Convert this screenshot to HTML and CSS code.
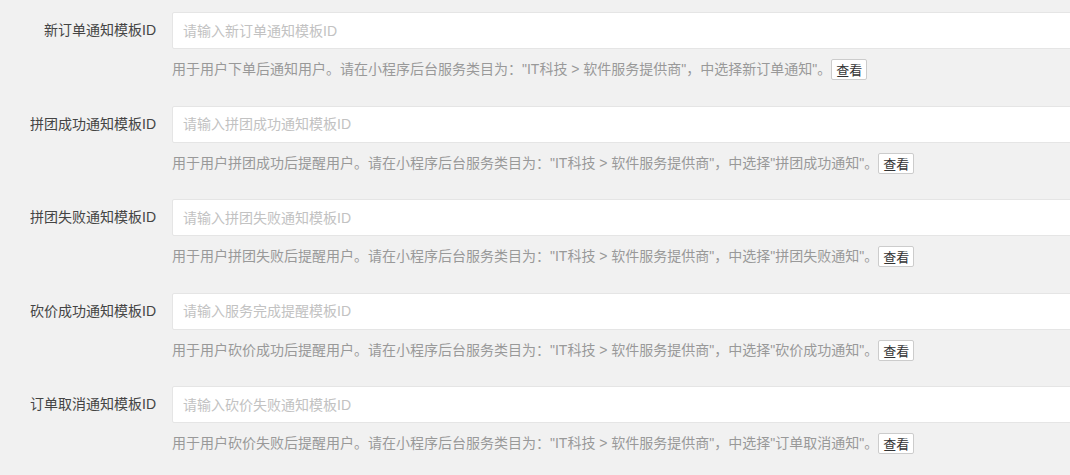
FILE: index.html
```html
<!DOCTYPE html>
<html lang="zh-CN">
<head>
    <meta charset="UTF-8">
    <meta name="viewport" content="width=device-width, initial-scale=1.0">
    <title>模板消息设置</title>
    <link rel="stylesheet" href="styles.css">
</head>
<body>
    <form class="settings-form">
        <div class="form-group">
            <label class="form-label" for="tplNewOrder">新订单通知模板ID</label>
            <div class="form-control">
                <input type="text" id="tplNewOrder" class="form-input" placeholder="请输入新订单通知模板ID">
                <div class="help-block">用于用户下单后通知用户。请在小程序后台服务类目为："IT科技 &gt; 软件服务提供商"，中选择新订单通知"。<button type="button" class="btn-view">查看</button></div>
            </div>
        </div>

        <div class="form-group">
            <label class="form-label" for="tplGroupSuccess">拼团成功通知模板ID</label>
            <div class="form-control">
                <input type="text" id="tplGroupSuccess" class="form-input" placeholder="请输入拼团成功通知模板ID">
                <div class="help-block">用于用户拼团成功后提醒用户。请在小程序后台服务类目为："IT科技 &gt; 软件服务提供商"，中选择"拼团成功通知"。<button type="button" class="btn-view">查看</button></div>
            </div>
        </div>

        <div class="form-group">
            <label class="form-label" for="tplGroupFail">拼团失败通知模板ID</label>
            <div class="form-control">
                <input type="text" id="tplGroupFail" class="form-input" placeholder="请输入拼团失败通知模板ID">
                <div class="help-block">用于用户拼团失败后提醒用户。请在小程序后台服务类目为："IT科技 &gt; 软件服务提供商"，中选择"拼团失败通知"。<button type="button" class="btn-view">查看</button></div>
            </div>
        </div>

        <div class="form-group">
            <label class="form-label" for="tplBargainSuccess">砍价成功通知模板ID</label>
            <div class="form-control">
                <input type="text" id="tplBargainSuccess" class="form-input" placeholder="请输入服务完成提醒模板ID">
                <div class="help-block">用于用户砍价成功后提醒用户。请在小程序后台服务类目为："IT科技 &gt; 软件服务提供商"，中选择"砍价成功通知"。<button type="button" class="btn-view">查看</button></div>
            </div>
        </div>

        <div class="form-group">
            <label class="form-label" for="tplOrderCancel">订单取消通知模板ID</label>
            <div class="form-control">
                <input type="text" id="tplOrderCancel" class="form-input" placeholder="请输入砍价失败通知模板ID">
                <div class="help-block">用于用户砍价失败后提醒用户。请在小程序后台服务类目为："IT科技 &gt; 软件服务提供商"，中选择"订单取消通知"。<button type="button" class="btn-view">查看</button></div>
            </div>
        </div>
    </form>
</body>
</html>
```

FILE: styles.css
```css
body {
    margin: 0;
    background-color: #f1f1f1;
    font-family: "Liberation Sans", "Noto Sans CJK SC", sans-serif;
    font-size: 14px;
    color: #333;
    overflow: hidden;
}

.settings-form {
    padding-top: 12px;
}

.form-group {
    display: flex;
    align-items: flex-start;
    margin-bottom: 25.5px;
}

.form-label {
    width: 172px;
    flex-shrink: 0;
    padding-right: 16px;
    box-sizing: border-box;
    text-align: right;
    line-height: 37px;
    font-size: 14px;
    color: #444;
}

.form-control {
    flex-shrink: 0;
    width: 1000px;
}

.form-input {
    display: block;
    width: 100%;
    height: 37px;
    box-sizing: border-box;
    padding: 0 10px;
    border: 1px solid #e5e5e5;
    border-radius: 2px;
    background-color: #fff;
    font-family: inherit;
    font-size: 14px;
    color: #333;
    outline: none;
}

.form-input::placeholder {
    color: #c2c2c2;
}

.help-block {
    margin-top: 10px;
    height: 21px;
    line-height: 21px;
    font-size: 14px;
    color: #999;
    white-space: nowrap;
}

.btn-view {
    height: 21px;
    margin-left: 0;
    padding: 0 4px;
    vertical-align: top;
    border: 1px solid #ccc;
    border-radius: 2px;
    background-color: #fff;
    font-family: inherit;
    font-size: 13px;
    color: #333;
    cursor: pointer;
}
```
